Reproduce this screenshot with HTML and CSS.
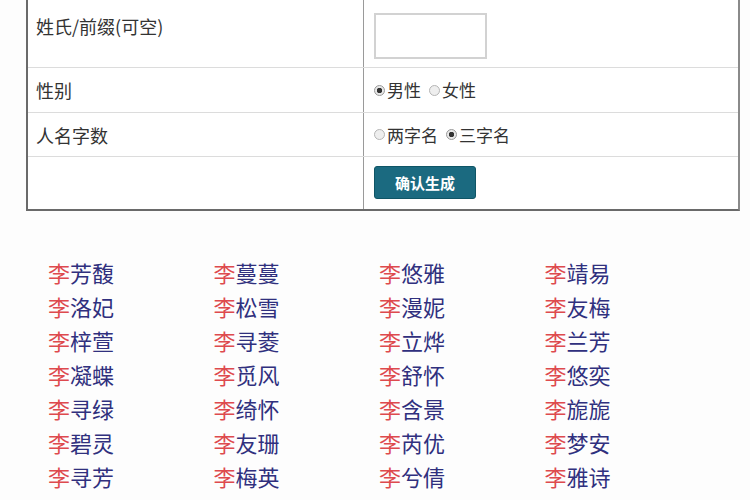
FILE: index.html
```html
<!DOCTYPE html>
<html lang="zh-CN">
<head>
<meta charset="utf-8">
<link rel="stylesheet" href="styles.css">
</head>
<body>
<div class="form">
  <div class="row r1">
    <div class="label top">姓氏/前缀(可空)</div>
    <div class="field"><input class="text" type="text"></div>
  </div>
  <div class="row r2">
    <div class="label">性别</div>
    <div class="field"><label class="opt"><input type="radio" name="g" checked>男性</label><label class="opt"><input type="radio" name="g">女性</label></div>
  </div>
  <div class="row r3">
    <div class="label">人名字数</div>
    <div class="field"><label class="opt"><input type="radio" name="n">两字名</label><label class="opt"><input type="radio" name="n" checked>三字名</label></div>
  </div>
  <div class="row r4">
    <div class="label"></div>
    <div class="field"><button class="btn">确认生成</button></div>
  </div>
</div>
<div class="names">
  <div class="name"><span class="sur">李</span>芳馥</div>
  <div class="name"><span class="sur">李</span>蔓蔓</div>
  <div class="name"><span class="sur">李</span>悠雅</div>
  <div class="name"><span class="sur">李</span>靖易</div>
  <div class="name"><span class="sur">李</span>洛妃</div>
  <div class="name"><span class="sur">李</span>松雪</div>
  <div class="name"><span class="sur">李</span>漫妮</div>
  <div class="name"><span class="sur">李</span>友梅</div>
  <div class="name"><span class="sur">李</span>梓萱</div>
  <div class="name"><span class="sur">李</span>寻菱</div>
  <div class="name"><span class="sur">李</span>立烨</div>
  <div class="name"><span class="sur">李</span>兰芳</div>
  <div class="name"><span class="sur">李</span>凝蝶</div>
  <div class="name"><span class="sur">李</span>觅风</div>
  <div class="name"><span class="sur">李</span>舒怀</div>
  <div class="name"><span class="sur">李</span>悠奕</div>
  <div class="name"><span class="sur">李</span>寻绿</div>
  <div class="name"><span class="sur">李</span>绮怀</div>
  <div class="name"><span class="sur">李</span>含景</div>
  <div class="name"><span class="sur">李</span>旎旎</div>
  <div class="name"><span class="sur">李</span>碧灵</div>
  <div class="name"><span class="sur">李</span>友珊</div>
  <div class="name"><span class="sur">李</span>芮优</div>
  <div class="name"><span class="sur">李</span>梦安</div>
  <div class="name"><span class="sur">李</span>寻芳</div>
  <div class="name"><span class="sur">李</span>梅英</div>
  <div class="name"><span class="sur">李</span>兮倩</div>
  <div class="name"><span class="sur">李</span>雅诗</div>
</div>
</body>
</html>
```

FILE: styles.css
```css
* { box-sizing: border-box; }
html, body { margin: 0; padding: 0; }
body {
  background: #fdfdfd;
  font-family: "Noto Sans CJK SC", "Noto Sans", sans-serif;
  color: #333;
  overflow: hidden;
}
.form {
  margin: -2px 0 0 26px;
  width: 714px;
  border: 2px solid #6a6a6a;
  border-right-color: #8a8a8a;
  background: #fff;
}
.row {
  display: grid;
  grid-template-columns: 336px 1fr;
  border-bottom: 1px solid #dcdcdc;
}
.row.r4 { border-bottom: none; }
.r1 { height: 68px; }
.r2 { height: 45px; }
.r3 { height: 44px; }
.r4 { height: 52px; }
.label {
  border-right: 1px solid #9a9a9a;
  padding-left: 8px;
  font-size: 18px;
  line-height: 20px;
  display: flex;
  align-items: center;
  color: #333;
}
.label.top { align-items: flex-start; padding-top: 16px; }
.field {
  display: flex;
  align-items: center;
  padding-left: 10px;
  font-size: 17px;
}
.text {
  width: 113px;
  height: 46px;
  border: 2px solid #d2d2d2;
  background: #fff;
  margin-top: 4px;
}
.opt {
  display: inline-flex;
  align-items: center;
  margin-right: 8px;
  color: #333;
  line-height: 20px;
}
.opt input {
  appearance: none;
  -webkit-appearance: none;
  width: 11px;
  height: 11px;
  margin: 0 2px 0 0;
  border: 1px solid #b5b5b5;
  border-radius: 50%;
  background: #eee;
}
.opt input:checked {
  background: radial-gradient(circle, #333 0 2.5px, #e8e8e8 3px);
  border-color: #999;
}
.btn {
  width: 102px;
  height: 33px;
  margin-top: -2px;
  border: 1px solid #0f5566;
  border-radius: 3px;
  background: #1b6a80;
  color: #fff;
  font-family: "Noto Sans CJK SC", sans-serif;
  font-size: 15px;
  font-weight: bold;
  padding: 0;
}
.names {
  margin-top: 44px;
  padding-left: 48px;
  display: grid;
  grid-template-columns: repeat(4, 165.5px);
  font-size: 22px;
  line-height: 34px;
}
.name { color: #30307e; white-space: nowrap; }
.sur { color: #de4a4e; }
```
